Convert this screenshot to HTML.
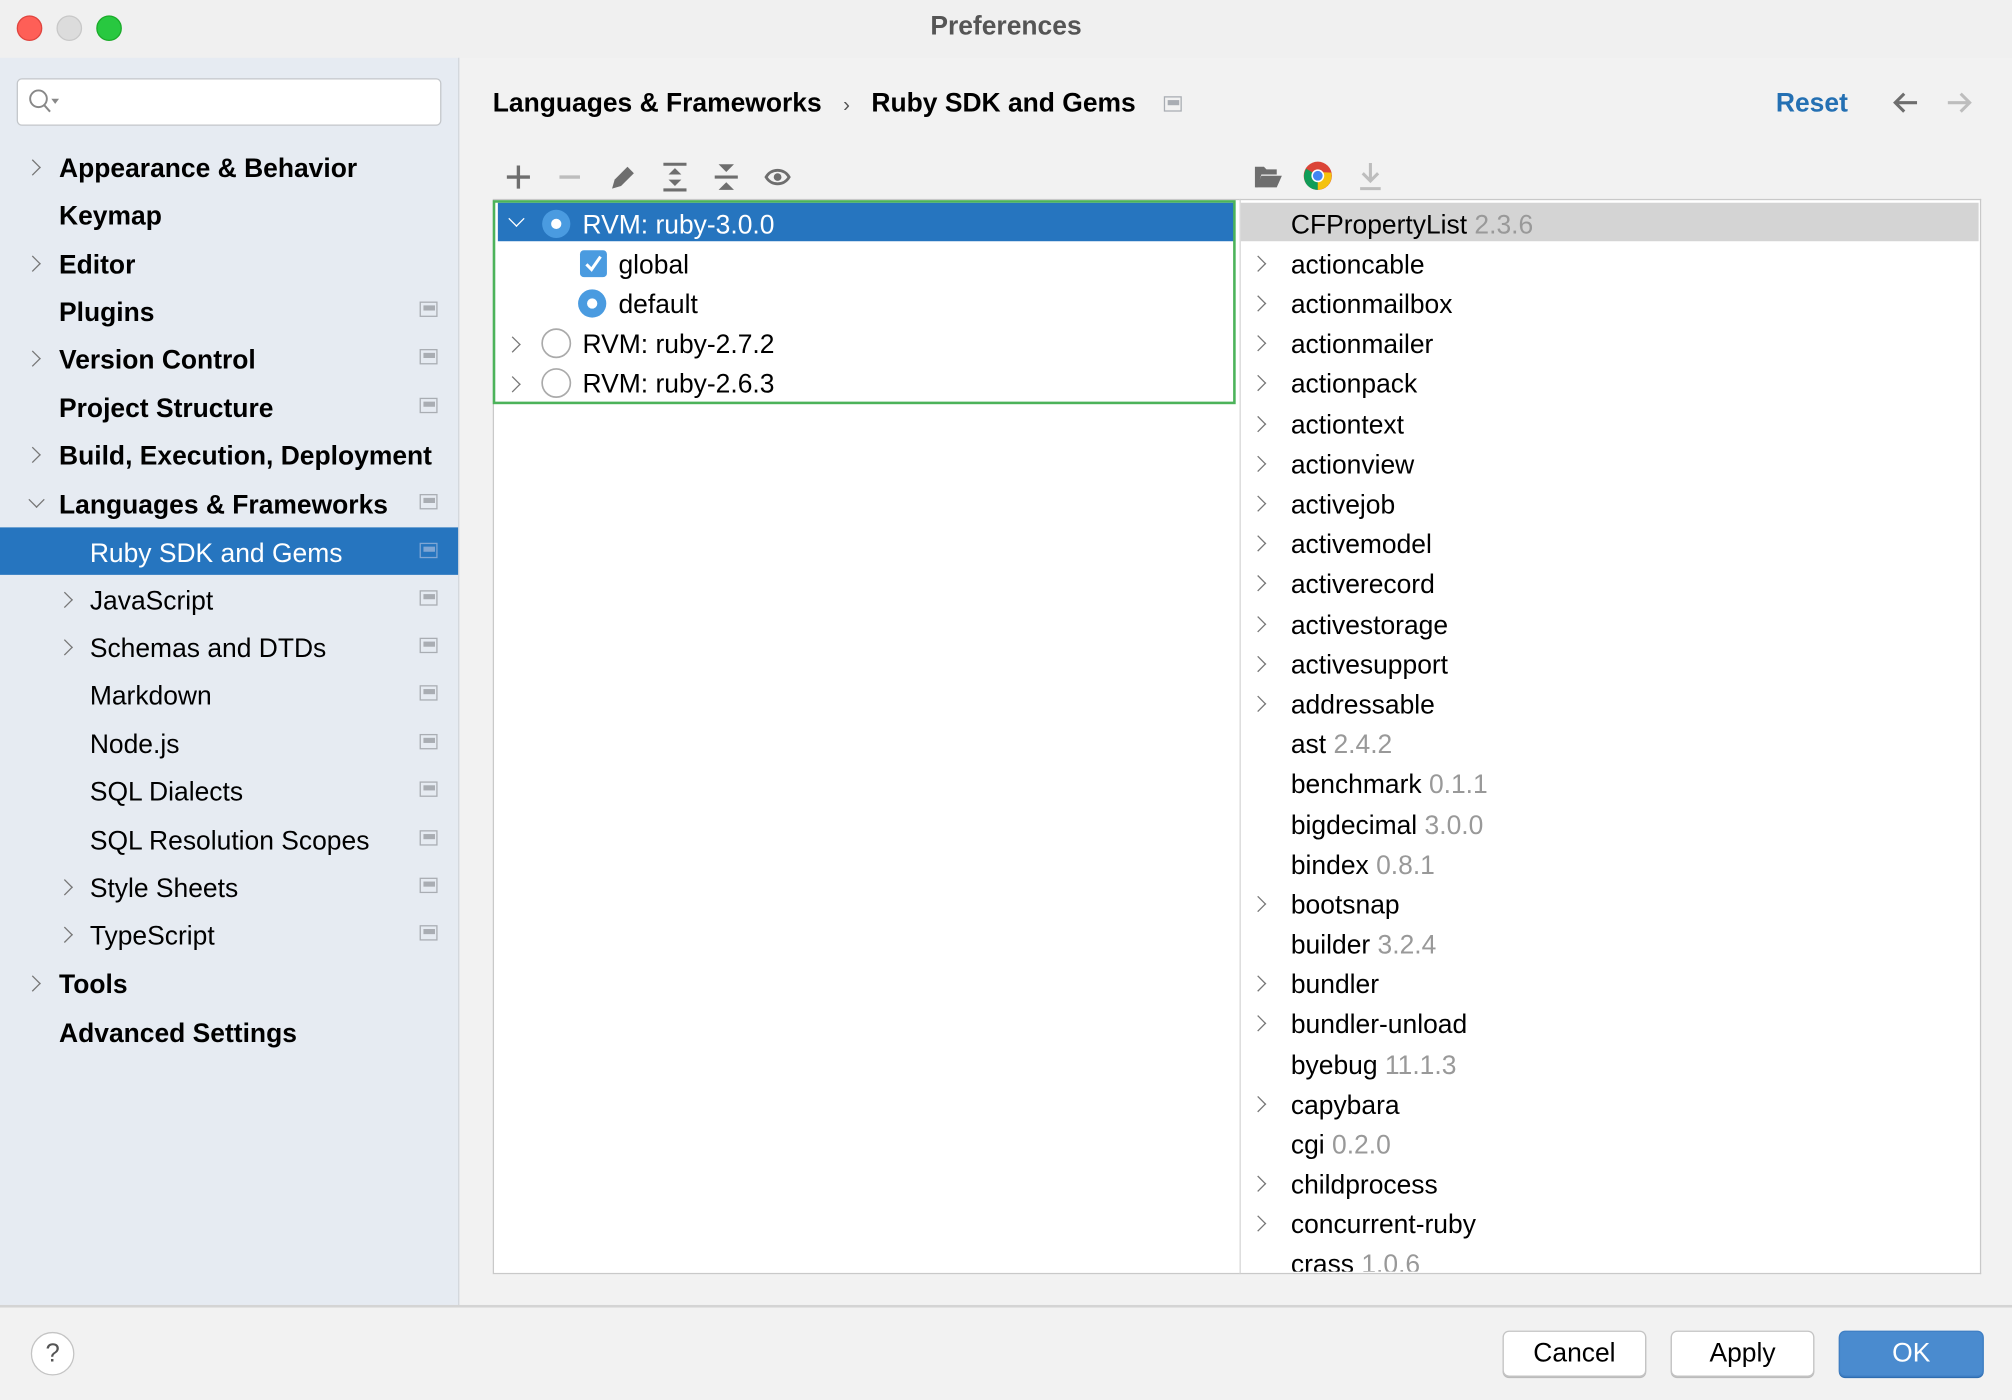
<!DOCTYPE html>
<html><head><meta charset="utf-8">
<style>
html,body{margin:0;padding:0;width:2012px;height:1400px;overflow:hidden;background:#f2f2f2;}
#w{position:absolute;left:0;top:0;width:1568px;height:1091px;transform:scale(1.28316);transform-origin:0 0;font-family:"Liberation Sans",sans-serif;font-size:20.6px;color:#000;background:#f2f2f2;}
.a{position:absolute;}
.title{left:0;top:0;width:1568px;height:45px;background:#f0f0f0;text-align:center;line-height:42px;color:#555;font-weight:bold;font-size:20.6px;}
.tl{width:18px;height:18px;border-radius:50%;top:12px;}
.side{left:0;top:45px;width:357px;height:973px;background:#e6ebf2;border-right:1px solid #d3d6db;}
.si{position:absolute;left:0;width:357px;height:37px;line-height:37px;white-space:nowrap;}
.si b{font-weight:bold;}
.si .t{position:absolute;top:2px;}
.chev{position:absolute;width:8px;height:8px;border-right:1.6px solid #777;border-bottom:1.6px solid #777;}
.cr{transform:rotate(-45deg);}
.cd{transform:rotate(45deg);}
.pg{position:absolute;left:327px;top:12px;width:12px;height:10px;border:1.5px solid #a9adb3;}
.pg:after{content:"";position:absolute;left:1.5px;top:1.5px;width:9px;height:4px;background:#a9adb3;}
.sel{background:#2675bf;color:#fff;}
.sel .pg{border-color:#7fa6d4}.sel .pg:after{background:#7fa6d4}
.row{position:absolute;height:31px;line-height:31px;white-space:nowrap;margin-top:1.5px;}
.v{color:#999;}
.btn{top:1037px;height:34px;border:1px solid #c4c4c4;border-radius:5px;background:#fff;text-align:center;line-height:34px;box-shadow:0 1px 0 #bbb;}
</style></head><body><div id="w">
<div class="a title">Preferences</div>
<div class="a tl" style="left:13px;background:#fe5f57;border:0.5px solid #e0443e"></div>
<div class="a tl" style="left:44px;background:#dcdcdc;border:0.5px solid #c8c8c8"></div>
<div class="a tl" style="left:75px;background:#28c840;border:0.5px solid #1aab29"></div>

<div class="a side"></div>
<div class="a" style="left:13px;top:61px;width:329px;height:35px;background:#fff;border:1px solid #c3c6ca;border-radius:4px;"></div>
<svg class="a" style="left:21px;top:69px" width="26" height="20"><circle cx="9" cy="8" r="6.5" fill="none" stroke="#888" stroke-width="1.5"/><line x1="13.5" y1="13" x2="18" y2="18" stroke="#888" stroke-width="1.6"/><path d="M19 8h6l-3 4z" fill="#888"/></svg>

<div class="si" style="top:111px"><span class="chev cr" style="left:21px;top:15px"></span><b class="t" style="left:46px">Appearance &amp; Behavior</b></div>
<div class="si" style="top:148px"><b class="t" style="left:46px">Keymap</b></div>
<div class="si" style="top:186px"><span class="chev cr" style="left:21px;top:15px"></span><b class="t" style="left:46px">Editor</b></div>
<div class="si" style="top:223px"><b class="t" style="left:46px">Plugins</b><span class="pg"></span></div>
<div class="si" style="top:260px"><span class="chev cr" style="left:21px;top:15px"></span><b class="t" style="left:46px">Version Control</b><span class="pg"></span></div>
<div class="si" style="top:298px"><b class="t" style="left:46px">Project Structure</b><span class="pg"></span></div>
<div class="si" style="top:335px"><span class="chev cr" style="left:21px;top:15px"></span><b class="t" style="left:46px">Build, Execution, Deployment</b></div>
<div class="si" style="top:373px"><span class="chev cd" style="left:24px;top:12px"></span><b class="t" style="left:46px">Languages &amp; Frameworks</b><span class="pg"></span></div>
<div class="si sel" style="top:411px"><span class="t" style="left:70px">Ruby SDK and Gems</span><span class="pg"></span></div>
<div class="si" style="top:448px"><span class="chev cr" style="left:46px;top:15px"></span><span class="t" style="left:70px">JavaScript</span><span class="pg"></span></div>
<div class="si" style="top:485px"><span class="chev cr" style="left:46px;top:15px"></span><span class="t" style="left:70px">Schemas and DTDs</span><span class="pg"></span></div>
<div class="si" style="top:522px"><span class="t" style="left:70px">Markdown</span><span class="pg"></span></div>
<div class="si" style="top:560px"><span class="t" style="left:70px">Node.js</span><span class="pg"></span></div>
<div class="si" style="top:597px"><span class="t" style="left:70px">SQL Dialects</span><span class="pg"></span></div>
<div class="si" style="top:635px"><span class="t" style="left:70px">SQL Resolution Scopes</span><span class="pg"></span></div>
<div class="si" style="top:672px"><span class="chev cr" style="left:46px;top:15px"></span><span class="t" style="left:70px">Style Sheets</span><span class="pg"></span></div>
<div class="si" style="top:709px"><span class="chev cr" style="left:46px;top:15px"></span><span class="t" style="left:70px">TypeScript</span><span class="pg"></span></div>
<div class="si" style="top:747px"><span class="chev cr" style="left:21px;top:15px"></span><b class="t" style="left:46px">Tools</b></div>
<div class="si" style="top:785px"><b class="t" style="left:46px">Advanced Settings</b></div>

<div class="a" style="left:384px;top:68px;font-weight:bold;white-space:nowrap;line-height:26px">Languages &amp; Frameworks <span style="font-weight:normal;color:#555;font-size:16px;margin:0 11px">›</span> Ruby SDK and Gems</div>
<span class="a pg" style="left:907px;top:75px;"></span>
<div class="a" style="left:1384px;top:68px;font-weight:bold;color:#2470b3;line-height:26px">Reset</div>
<svg class="a" style="left:1474px;top:70px" width="64" height="20"><path d="M20 10H3M10 3L3 10l7 7" fill="none" stroke="#6e6e6e" stroke-width="2.4"/><path d="M44 10h17M54 3l7 7-7 7" fill="none" stroke="#bdbdbd" stroke-width="2.4"/></svg>

<svg class="a" style="left:392px;top:125px" width="240" height="26">
<path d="M12 4v18M3 13h18" stroke="#6e6e6e" stroke-width="2.6"/>
<path d="M44 13h16" stroke="#bdbdbd" stroke-width="2.6"/>
<path d="M85 22l2-7 10-10 5 5-10 10z" fill="#6e6e6e"/>
<path d="M125 3h18M125 23h18" stroke="#6e6e6e" stroke-width="2.4"/><path d="M129 11l5-5 5 5zM129 15l5 5 5-5z" fill="#6e6e6e"/>
<path d="M165 13h18" stroke="#6e6e6e" stroke-width="2.4"/><path d="M168 3l6 6 6-6zM168 23l6-6 6 6z" fill="#6e6e6e"/>
<path d="M205 13c4-7 14-7 18 0c-4 7-14 7-18 0z" fill="none" stroke="#6e6e6e" stroke-width="2.2"/><circle cx="214" cy="13" r="3" fill="#6e6e6e"/>
</svg>

<div class="a" style="left:384px;top:155px;width:581px;height:836px;background:#fff;border:1px solid #c9c9c9;"></div>
<div class="a" style="left:966px;top:155px;width:576px;height:836px;background:#fff;border:1px solid #c9c9c9;border-left:1px solid #d6d6d6"></div>
<div class="a" style="left:388px;top:158px;width:574px;height:30px;background:#2675bf"></div>
<div class="a" style="left:384px;top:156px;width:575px;height:155px;border:2.5px solid #4cb35a;"></div>

<span class="a chev cd" style="left:398px;top:166px;border-color:#fff"></span>
<svg class="a" style="left:421px;top:162px" width="26" height="26"><circle cx="12.5" cy="12.5" r="11" fill="#4a9be0"/><circle cx="12.5" cy="12.5" r="4" fill="#fff"/></svg>
<div class="row" style="left:454px;top:158px;color:#fff">RVM: ruby-3.0.0</div>
<div class="a" style="left:452px;top:195px;width:21px;height:21px;background:#4a9be0;border-radius:3px"></div>
<svg class="a" style="left:452px;top:195px" width="21" height="21"><path d="M5 11l4 4 7-10" fill="none" stroke="#fff" stroke-width="2.4"/></svg>
<div class="row" style="left:482px;top:189px">global</div>
<svg class="a" style="left:449px;top:224px" width="26" height="26"><circle cx="12.5" cy="12.5" r="11" fill="#4a9be0"/><circle cx="12.5" cy="12.5" r="4" fill="#fff"/></svg>
<div class="row" style="left:482px;top:220px">default</div>
<span class="a chev cr" style="left:395px;top:264px"></span>
<svg class="a" style="left:421px;top:255px" width="26" height="26"><circle cx="12.5" cy="12.5" r="11" fill="#fff" stroke="#aaa" stroke-width="1.3"/></svg>
<div class="row" style="left:454px;top:251px">RVM: ruby-2.7.2</div>
<span class="a chev cr" style="left:395px;top:295px"></span>
<svg class="a" style="left:421px;top:286px" width="26" height="26"><circle cx="12.5" cy="12.5" r="11" fill="#fff" stroke="#aaa" stroke-width="1.3"/></svg>
<div class="row" style="left:454px;top:282px">RVM: ruby-2.6.3</div>

<svg class="a" style="left:976px;top:124px" width="110" height="28">
<path d="M2 6h7l2 2h8v4H7l-3 10H2z" fill="#6e6e6e"/><path d="M7 13h16l-4 9H3z" fill="#6e6e6e"/>
<circle cx="51" cy="13" r="11" fill="#db4437"/>
<path d="M51 13L41.5 18.5A11 11 0 0 0 51 24z" fill="#0f9d58"/><path d="M51 13L41.5 18.5A11 11 0 0 1 42 7.5z" fill="#0f9d58"/>
<path d="M51 13L51 24A11 11 0 0 0 61.5 10.5L51 10z" fill="#f4c20d"/>
<circle cx="51" cy="13" r="5" fill="#fff"/><circle cx="51" cy="13" r="3.8" fill="#4285f4"/>
<path d="M92 3v14M86 11l6 6 6-6M84 23h16" fill="none" stroke="#bdbdbd" stroke-width="2.4"/>
</svg>

<div class="a" style="left:967px;top:158px;width:575px;height:30px;background:#d4d4d4"></div>
<div class="row" style="left:1006px;top:158px">CFPropertyList <span class="v">2.3.6</span></div>
<span class="a chev cr" style="left:976px;top:201px"></span><div class="row" style="left:1006px;top:189px">actioncable</div>
<span class="a chev cr" style="left:976px;top:232px"></span><div class="row" style="left:1006px;top:220px">actionmailbox</div>
<span class="a chev cr" style="left:976px;top:263px"></span><div class="row" style="left:1006px;top:251px">actionmailer</div>
<span class="a chev cr" style="left:976px;top:294px"></span><div class="row" style="left:1006px;top:282px">actionpack</div>
<span class="a chev cr" style="left:976px;top:326px"></span><div class="row" style="left:1006px;top:314px">actiontext</div>
<span class="a chev cr" style="left:976px;top:357px"></span><div class="row" style="left:1006px;top:345px">actionview</div>
<span class="a chev cr" style="left:976px;top:388px"></span><div class="row" style="left:1006px;top:376px">activejob</div>
<span class="a chev cr" style="left:976px;top:419px"></span><div class="row" style="left:1006px;top:407px">activemodel</div>
<span class="a chev cr" style="left:976px;top:450px"></span><div class="row" style="left:1006px;top:438px">activerecord</div>
<span class="a chev cr" style="left:976px;top:482px"></span><div class="row" style="left:1006px;top:470px">activestorage</div>
<span class="a chev cr" style="left:976px;top:513px"></span><div class="row" style="left:1006px;top:501px">activesupport</div>
<span class="a chev cr" style="left:976px;top:544px"></span><div class="row" style="left:1006px;top:532px">addressable</div>
<div class="row" style="left:1006px;top:563px">ast <span class="v">2.4.2</span></div>
<div class="row" style="left:1006px;top:594px">benchmark <span class="v">0.1.1</span></div>
<div class="row" style="left:1006px;top:626px">bigdecimal <span class="v">3.0.0</span></div>
<div class="row" style="left:1006px;top:657px">bindex <span class="v">0.8.1</span></div>
<span class="a chev cr" style="left:976px;top:700px"></span><div class="row" style="left:1006px;top:688px">bootsnap</div>
<div class="row" style="left:1006px;top:719px">builder <span class="v">3.2.4</span></div>
<span class="a chev cr" style="left:976px;top:762px"></span><div class="row" style="left:1006px;top:750px">bundler</div>
<span class="a chev cr" style="left:976px;top:793px"></span><div class="row" style="left:1006px;top:781px">bundler-unload</div>
<div class="row" style="left:1006px;top:813px">byebug <span class="v">11.1.3</span></div>
<span class="a chev cr" style="left:976px;top:856px"></span><div class="row" style="left:1006px;top:844px">capybara</div>
<div class="row" style="left:1006px;top:875px">cgi <span class="v">0.2.0</span></div>
<span class="a chev cr" style="left:976px;top:918px"></span><div class="row" style="left:1006px;top:906px">childprocess</div>
<span class="a chev cr" style="left:976px;top:949px"></span><div class="row" style="left:1006px;top:937px">concurrent-ruby</div>
<div class="a" style="left:967px;top:968px;width:575px;height:23px;overflow:hidden"><div class="row" style="left:39px;top:0px">crass <span class="v">1.0.6</span></div></div>

<div class="a" style="left:0;top:1017px;width:1568px;height:2px;background:#d4d4d4"></div>
<div class="a" style="left:24px;top:1038px;width:32px;height:32px;border-radius:50%;border:1px solid #c4c4c4;background:#fff;text-align:center;line-height:32px;color:#555;font-size:20px">?</div>
<div class="a btn" style="left:1171px;width:110px">Cancel</div>
<div class="a btn" style="left:1302px;width:110px">Apply</div>
<div class="a btn" style="left:1433px;width:111px;background:#4a8bcf;border-color:#3f7fc4;color:#fff;box-shadow:0 1px 0 #2f6db0">OK</div>
</div></body></html>
